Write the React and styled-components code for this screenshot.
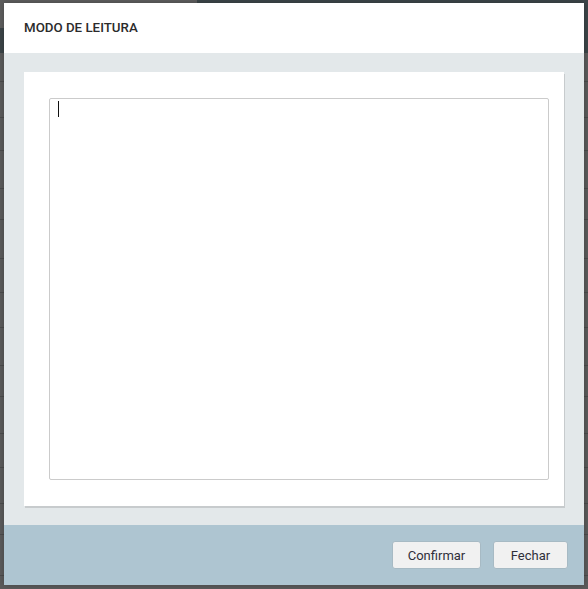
import React from "react";
import styled, { createGlobalStyle } from "styled-components";

const GlobalStyle = createGlobalStyle`
  html, body { margin: 0; padding: 0; }
  body {
    background: #5b5b5b;
    font-family: Roboto, "Liberation Sans", Arial, sans-serif;
    width: 588px;
    height: 589px;
    overflow: hidden;
  }
`;

/* ---------- dimmed page behind the dialog ---------- */
const Page = styled.div`
  width: 588px;
  height: 589px;
  display: flex;
  flex-direction: column;
  background: #5b5b5b;
`;

const TopBar = styled.div`
  height: 53px;
  display: grid;
  grid-template-columns: 197px 1fr;
  background: #3c4548;
`;

const TopLeft = styled.div`
  display: flex;
  flex-direction: column;
`;

const TopLeftUpper = styled.div`
  height: 28px;
  background: #5e5e5e;
`;

const TableRow = styled.div`
  height: ${(p) => p.$h}px;
  border-bottom: 1px solid #4b4b4b;
  display: flex;
  align-items: flex-end;
  justify-content: center;
  color: #2e2e2e;
  font-size: 13px;
  line-height: 1;
  flex-shrink: 0;
`;

const BottomLabel = styled.span`
  margin-right: -110px;
  transform: translateY(4px);
`;

/* ---------- dialog ---------- */
const Modal = styled.div`
  position: fixed;
  top: 3px;
  left: 4px;
  width: 580px;
  height: 582px;
  display: flex;
  flex-direction: column;
  background: #fff;
  box-shadow: 0 0 6px rgba(0, 0, 0, 0.25);
`;

const Header = styled.div`
  height: 50px;
  flex-shrink: 0;
  display: flex;
  align-items: center;
  padding: 0 20px;
  background: #ffffff;
`;

const Title = styled.h4`
  margin: 0;
  font-size: 13.3px;
  font-weight: 500;
  color: #2b2b2b;
  letter-spacing: 0;
  transform: translateY(-1px);
`;

const Body = styled.div`
  flex: 1;
  background: #e3e8ea;
  padding: 19px 20px 19px 20px;
  display: flex;
`;

const Card = styled.div`
  flex: 1;
  background: #fff;
  box-shadow: 1px 2px 0 #c7cbcd;
  padding: 26px 15px 26px 25px;
  display: flex;
`;

const EditorWrap = styled.div`
  position: relative;
  flex: 1;
  display: flex;
`;

const TextArea = styled.textarea`
  flex: 1;
  width: 500px;
  box-sizing: border-box;
  resize: none;
  border: 1px solid #cbcbcb;
  border-radius: 2px;
  padding: 3px 8px;
  margin: 0;
  font-family: Roboto, "Liberation Sans", Arial, sans-serif;
  font-size: 13px;
  line-height: 15px;
  color: #333;
  background: #fff;
  outline: none;
  caret-color: transparent;
`;

const Caret = styled.span`
  position: absolute;
  left: 9px;
  top: 3px;
  width: 1px;
  height: 16px;
  background: #111;
  pointer-events: none;
`;

const Footer = styled.div`
  height: 60px;
  flex-shrink: 0;
  background: #aec5d1;
  display: flex;
  align-items: center;
  justify-content: flex-end;
  gap: 12px;
  padding: 0 16px;
`;

const Button = styled.button`
  height: 28px;
  width: ${(p) => p.$w}px;
  box-sizing: border-box;
  background: #f1f1f1;
  border: 1px solid #a7bac4;
  border-radius: 3px;
  font-family: Roboto, "Liberation Sans", Arial, sans-serif;
  font-size: 13px;
  color: #2f2f3a;
  padding: 0;
  cursor: pointer;
`;

const rows = [28, 35, 32, 37, 30, 38, 33, 34, 37, 30, 36, 33, 35, 30];

export default function App() {
  return (
    <>
      <GlobalStyle />
      <Page>
        <TopBar>
          <TopLeft>
            <TopLeftUpper />
          </TopLeft>
          <div />
        </TopBar>
        {rows.map((h, i) => (
          <TableRow key={i} $h={h} />
        ))}
        <TableRow $h={40}>
          <BottomLabel>Cidade</BottomLabel>
        </TableRow>
      </Page>
      <Modal>
        <Header>
          <Title>MODO DE LEITURA</Title>
        </Header>
        <Body>
          <Card>
            <EditorWrap>
              <TextArea defaultValue="" />
              <Caret />
            </EditorWrap>
          </Card>
        </Body>
        <Footer>
          <Button $w={89}>Confirmar</Button>
          <Button $w={75}>Fechar</Button>
        </Footer>
      </Modal>
    </>
  );
}
